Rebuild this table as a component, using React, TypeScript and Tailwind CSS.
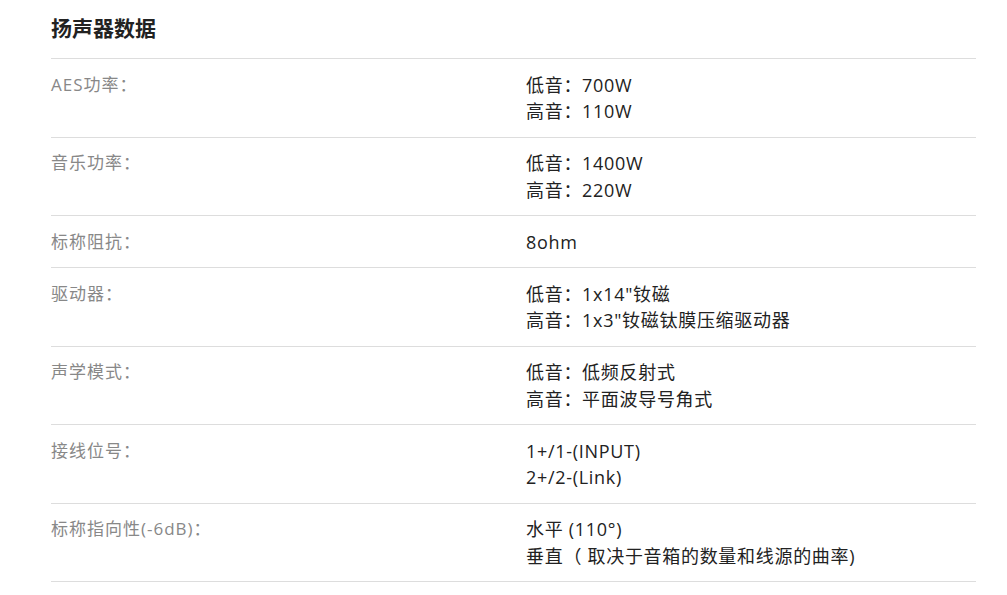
const specs: { label: string; values: string[] }[] = [
  { label: "AES功率：", values: ["低音：700W", "高音：110W"] },
  { label: "音乐功率：", values: ["低音：1400W", "高音：220W"] },
  { label: "标称阻抗：", values: ["8ohm"] },
  { label: "驱动器：", values: ["低音：1x14\"钕磁", "高音：1x3\"钕磁钛膜压缩驱动器"] },
  { label: "声学模式：", values: ["低音：低频反射式", "高音：平面波导号角式"] },
  { label: "接线位号：", values: ["1+/1-(INPUT)", "2+/2-(Link)"] },
  { label: "标称指向性(-6dB)：", values: ["水平 (110°)", "垂直（ 取决于音箱的数量和线源的曲率)"] },
];

export default function App() {
  return (
    <div className="min-h-[595px] bg-white font-['Open_Sans','Noto_Sans_CJK_SC',sans-serif]">
      <div className="ml-[51px] w-[925px]">
        {/* Header */}
        <h2 className="h-[59px] border-b border-[#dddddd] pt-[13px] text-[21px] leading-[30px] font-bold text-[#222222]">
          扬声器数据
        </h2>

        {/* Rows */}
        {specs.map((row) => (
          <div key={row.label} className="flex border-b border-[#dddddd] pt-[12.5px] pb-[12px] leading-[26.5px]">
            <div className="w-[475px] shrink-0 text-[17px] tracking-[1px] text-[#888888]">{row.label}</div>
            <div className="text-[18px] tracking-[0.7px] text-[#222222]">
              {row.values.map((v) => (
                <div key={v}>{v}</div>
              ))}
            </div>
          </div>
        ))}
      </div>
    </div>
  );
}
